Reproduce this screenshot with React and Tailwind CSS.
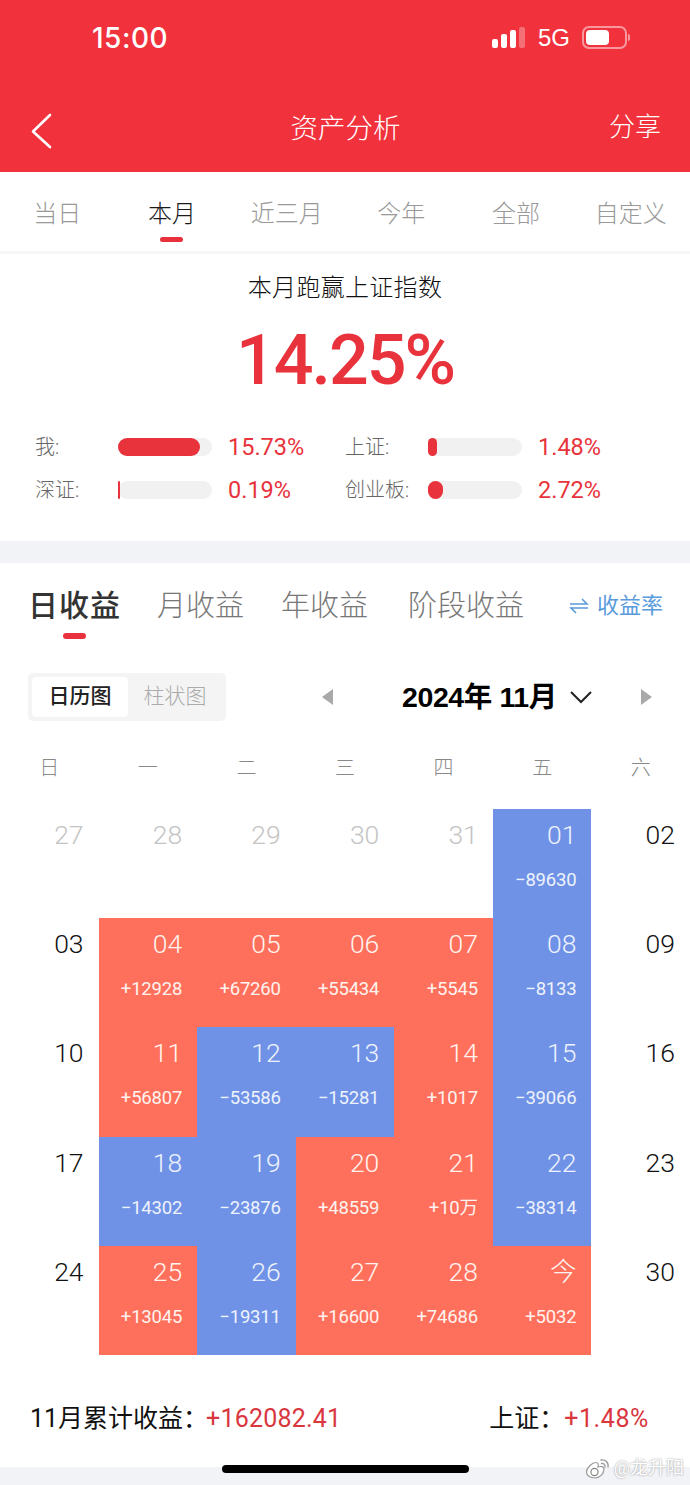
import React from 'react';

const periods = ['当日', '本月', '近三月', '今年', '全部', '自定义'];
const weekDays = ['日', '一', '二', '三', '四', '五', '六'];

const stats = [
    { label: '我:', value: '15.73%', fill: 'w-[82px]' },
    { label: '上证:', value: '1.48%', fill: 'w-[9px]' },
    { label: '深证:', value: '0.19%', fill: 'w-[2px]' },
    { label: '创业板:', value: '2.72%', fill: 'w-[15px]' },
];

// tone: m = muted previous month, n = plain, r = gain, b = loss
const days = [
    ['27', '', 'm'], ['28', '', 'm'], ['29', '', 'm'], ['30', '', 'm'], ['31', '', 'm'], ['01', '−89630', 'b'], ['02', '', 'n'],
    ['03', '', 'n'], ['04', '+12928', 'r'], ['05', '+67260', 'r'], ['06', '+55434', 'r'], ['07', '+5545', 'r'], ['08', '−8133', 'b'], ['09', '', 'n'],
    ['10', '', 'n'], ['11', '+56807', 'r'], ['12', '−53586', 'b'], ['13', '−15281', 'b'], ['14', '+1017', 'r'], ['15', '−39066', 'b'], ['16', '', 'n'],
    ['17', '', 'n'], ['18', '−14302', 'b'], ['19', '−23876', 'b'], ['20', '+48559', 'r'], ['21', '+10万', 'r'], ['22', '−38314', 'b'], ['23', '', 'n'],
    ['24', '', 'n'], ['25', '+13045', 'r'], ['26', '−19311', 'b'], ['27', '+16600', 'r'], ['28', '+74686', 'r'], ['今', '+5032', 'r'], ['30', '', 'n'],
];

const toneClass = {
    m: 'text-[#c4c4c4]',
    n: 'text-[#111]',
    r: 'bg-[#ff705c] text-[#fff3ef]',
    b: 'bg-[#6f92e6] text-[#eef2fc]',
};

function StatusBar() {
    return (
        <div className="flex h-[75px] items-center justify-between pl-[92px] pr-[60px] text-white">
            <span className="font-['Inter',sans-serif] text-[28px] font-medium tracking-[0.5px]">15:00</span>
            <div className="flex items-center">
                <div className="flex items-end gap-[3px]">
                    <div className="h-[9px] w-[6px] rounded-[2px] bg-white" />
                    <div className="h-[14px] w-[6px] rounded-[2px] bg-white" />
                    <div className="h-[18px] w-[6px] rounded-[2px] bg-white" />
                    <div className="h-[21px] w-[6px] rounded-[2px] bg-white/30" />
                </div>
                <span className="ml-[13px] font-['Liberation_Sans',sans-serif] text-[24px]">5G</span>
                <div className="ml-[12px] flex h-[23px] w-[45px] items-center rounded-[7px] border-2 border-white/50 p-[2px]">
                    <div className="h-full w-[23px] rounded-[4px] bg-white" />
                </div>
                <div className="ml-[1px] h-[7px] w-[2px] rounded-r-sm bg-white/50" />
            </div>
        </div>
    );
}

function NavBar() {
    return (
        <div className="grid h-[97px] grid-cols-3 items-start pl-[30px] pr-[29px] text-white">
            <svg width="22" height="36" viewBox="0 0 22 36" fill="none" className="mt-[38px]">
                <path d="M20 2 L3 18.5 L20 34" stroke="#fff" strokeWidth="2.6" strokeLinecap="round" strokeLinejoin="round" />
            </svg>
            <span className="mt-[35px] justify-self-center whitespace-nowrap text-[27.5px] font-light leading-[37px]">资产分析</span>
            <span className="mt-[34px] justify-self-end text-[26px] font-light leading-[37px]">分享</span>
        </div>
    );
}

function PeriodTabs() {
    return (
        <div className="grid h-[82px] grid-cols-6 border-b-[3px] border-[#f5f6f8] pr-[2px]">
            {periods.map((p) => (
                <div key={p} className="relative flex h-[80px] justify-center pt-[25px]">
                    <span className={`text-[24px] font-light leading-[34px] ${p === '本月' ? 'text-[#1a1a1a]' : 'text-[#999]'}`}>{p}</span>
                    {p === '本月' && <div className="absolute bottom-[10px] h-[5px] w-[23px] rounded-[3px] bg-[#e8313c]" />}
                </div>
            ))}
        </div>
    );
}

function Summary() {
    return (
        <div className="flex h-[287px] flex-col">
            <div className="mt-[17px] text-center text-[24px] font-light leading-[34px] tracking-[0.3px] text-[#111]">本月跑赢上证指数</div>
            <div className="mt-[12px] text-center text-[70px] font-medium leading-[86px] tracking-[-2px] text-[#e8333c]">14.25%</div>
            <div className="mt-[29px] grid grid-cols-[310px_1fr] gap-y-[13px] pl-[35px]">
                {stats.map((s) => (
                    <div key={s.label} className="flex h-[30px] items-center">
                        <span className="w-[83px] text-[20px] font-light text-[#666]">{s.label}</span>
                        <div className="h-[18px] w-[94px] rounded-full bg-[#f1f1f1]">
                            <div className={`h-full rounded-full bg-[#e8333c] ${s.fill}`} />
                        </div>
                        <span className="ml-[16px] text-[23.5px] leading-[30px] text-[#e8333c]">{s.value}</span>
                    </div>
                ))}
            </div>
        </div>
    );
}

function ProfitTabs() {
    return (
        <div className="relative flex h-[84px] items-start pl-[28px] pt-[21px]">
            <span className="text-[30px] font-medium leading-[44px] tracking-[1px] text-[#333]">日收益</span>
            <span className="ml-[36px] text-[29px] font-light leading-[44px] text-[#777]">月收益</span>
            <span className="ml-[37px] text-[29px] font-light leading-[44px] text-[#777]">年收益</span>
            <span className="ml-[40px] text-[29px] font-light leading-[44px] text-[#777]">阶段收益</span>
            <div className="ml-auto mr-[27px] flex h-[44px] items-center text-[#5a9bdc]">
                <svg width="20" height="16" viewBox="0 0 20 16" fill="none" className="mr-[8px]">
                    <path d="M1 6 H18 L13 1 M19 10 H2 L7 15" stroke="#5a9bdc" strokeWidth="1.6" />
                </svg>
                <span className="text-[22px] leading-[34px]">收益率</span>
            </div>
            <div className="absolute bottom-[8px] left-[63px] h-[6px] w-[23px] rounded-[3px] bg-[#e8313c]" />
        </div>
    );
}

function CalendarToolbar() {
    return (
        <div className="mt-[25px] flex h-[50px] items-center">
            <div className="ml-[28px] flex h-[48px] w-[198px] rounded-[5px] bg-[#f4f4f4] py-[4px] pl-[4px]">
                <div className="flex h-[40px] w-[96px] items-center justify-center rounded-[4px] bg-white text-[21px] font-medium text-[#222]">日历图</div>
                <div className="flex h-[40px] w-[94px] items-center justify-center text-[21px] font-light text-[#aaa]">柱状图</div>
            </div>
            <svg width="14" height="18" viewBox="0 0 14 18" className="ml-[94px]"><path d="M13 1 V17 L2 9 Z" fill="#a9a9a9" /></svg>
            <span className="ml-[68px] whitespace-nowrap font-['Liberation_Sans','Noto_Sans_CJK_SC',sans-serif] text-[28.5px] font-bold leading-[40px] tracking-[-0.4px] text-[#000]">2024年 11月</span>
            <svg width="24" height="14" viewBox="0 0 24 14" fill="none" className="ml-[12px]"><path d="M2 2 L12 12 L22 2" stroke="#222" strokeWidth="2" /></svg>
            <svg width="14" height="18" viewBox="0 0 14 18" className="ml-[47px]"><path d="M1 1 V17 L12 9 Z" fill="#a9a9a9" /></svg>
        </div>
    );
}

function Calendar() {
    return (
        <div>
            <div className="mt-[20px] grid h-[52px] grid-cols-7 items-center">
                {weekDays.map((d) => (
                    <div key={d} className="flex justify-center">
                        <span className="text-[20px] font-light text-[#888]">{d}</span>
                    </div>
                ))}
            </div>
            <div className="mt-[15px] grid grid-cols-7">
                {days.map(([date, amount, tone], i) => (
                    <div key={i} className={`flex h-[109.2px] flex-col items-end pr-[15px] pt-[10px] ${toneClass[tone]}`}>
                        <span className="text-[26.5px] font-light leading-[32px]">{date}</span>
                        {amount && <span className="mt-[16px] text-[18.5px] leading-[26px] tracking-[-0.2px]">{amount}</span>}
                    </div>
                ))}
            </div>
        </div>
    );
}

function Totals() {
    return (
        <div className="flex h-[112px] items-start justify-between pl-[30px] pr-[41px] pt-[47px] text-[25px] leading-[34px]">
            <div className="text-[#111]">
                <span>11月累计收益：</span>
                <span className="ml-[-2px] tracking-[0.2px] text-[#d9363e]">+162082.41</span>
            </div>
            <div className="text-[#111]">
                <span>上证：</span>
                <span className="tracking-[0.6px] text-[#d9363e]">+1.48%</span>
            </div>
        </div>
    );
}

function Watermark() {
    return (
        <div className="absolute bottom-[4px] right-[6px] flex items-center text-[18px] text-white [text-shadow:0_0_2px_#888]">
            <svg width="26" height="24" viewBox="0 0 26 24" fill="none" className="mr-[3px]">
                <path d="M10 22 C5 22 1.5 19.5 1.5 16 C1.5 12 7 6.5 11 6.5 C13.5 6.5 13.5 9 13 11 C16 10 19 10.5 19 13 C19 18 14.5 22 10 22 Z" fill="#fff" stroke="#999" strokeWidth="1.2" />
                <circle cx="9.5" cy="16" r="3.6" stroke="#888" strokeWidth="1.2" />
                <path d="M16 4 C20 3 24 6.5 23 11 M16.5 7.5 C18.5 7 20.5 9 20 11" stroke="#999" strokeWidth="1.3" strokeLinecap="round" />
            </svg>
            <span>@龙升阳</span>
        </div>
    );
}

export default function App() {
    return (
        <div className="relative h-[1485px] w-[690px] overflow-hidden bg-white font-['Roboto','Noto_Sans_CJK_SC',sans-serif]">
            <div className="h-[172px] bg-[#f1313c]">
                <StatusBar />
                <NavBar />
            </div>
            <PeriodTabs />
            <Summary />
            <div className="h-[22px] bg-[#f2f3f6]" />
            <ProfitTabs />
            <CalendarToolbar />
            <Calendar />
            <Totals />
            <div className="h-[18px] bg-[#f2f3f6]" />
            <div className="absolute bottom-[12px] left-[222px] h-[8px] w-[247px] rounded-full bg-black" />
            <Watermark />
        </div>
    );
}
